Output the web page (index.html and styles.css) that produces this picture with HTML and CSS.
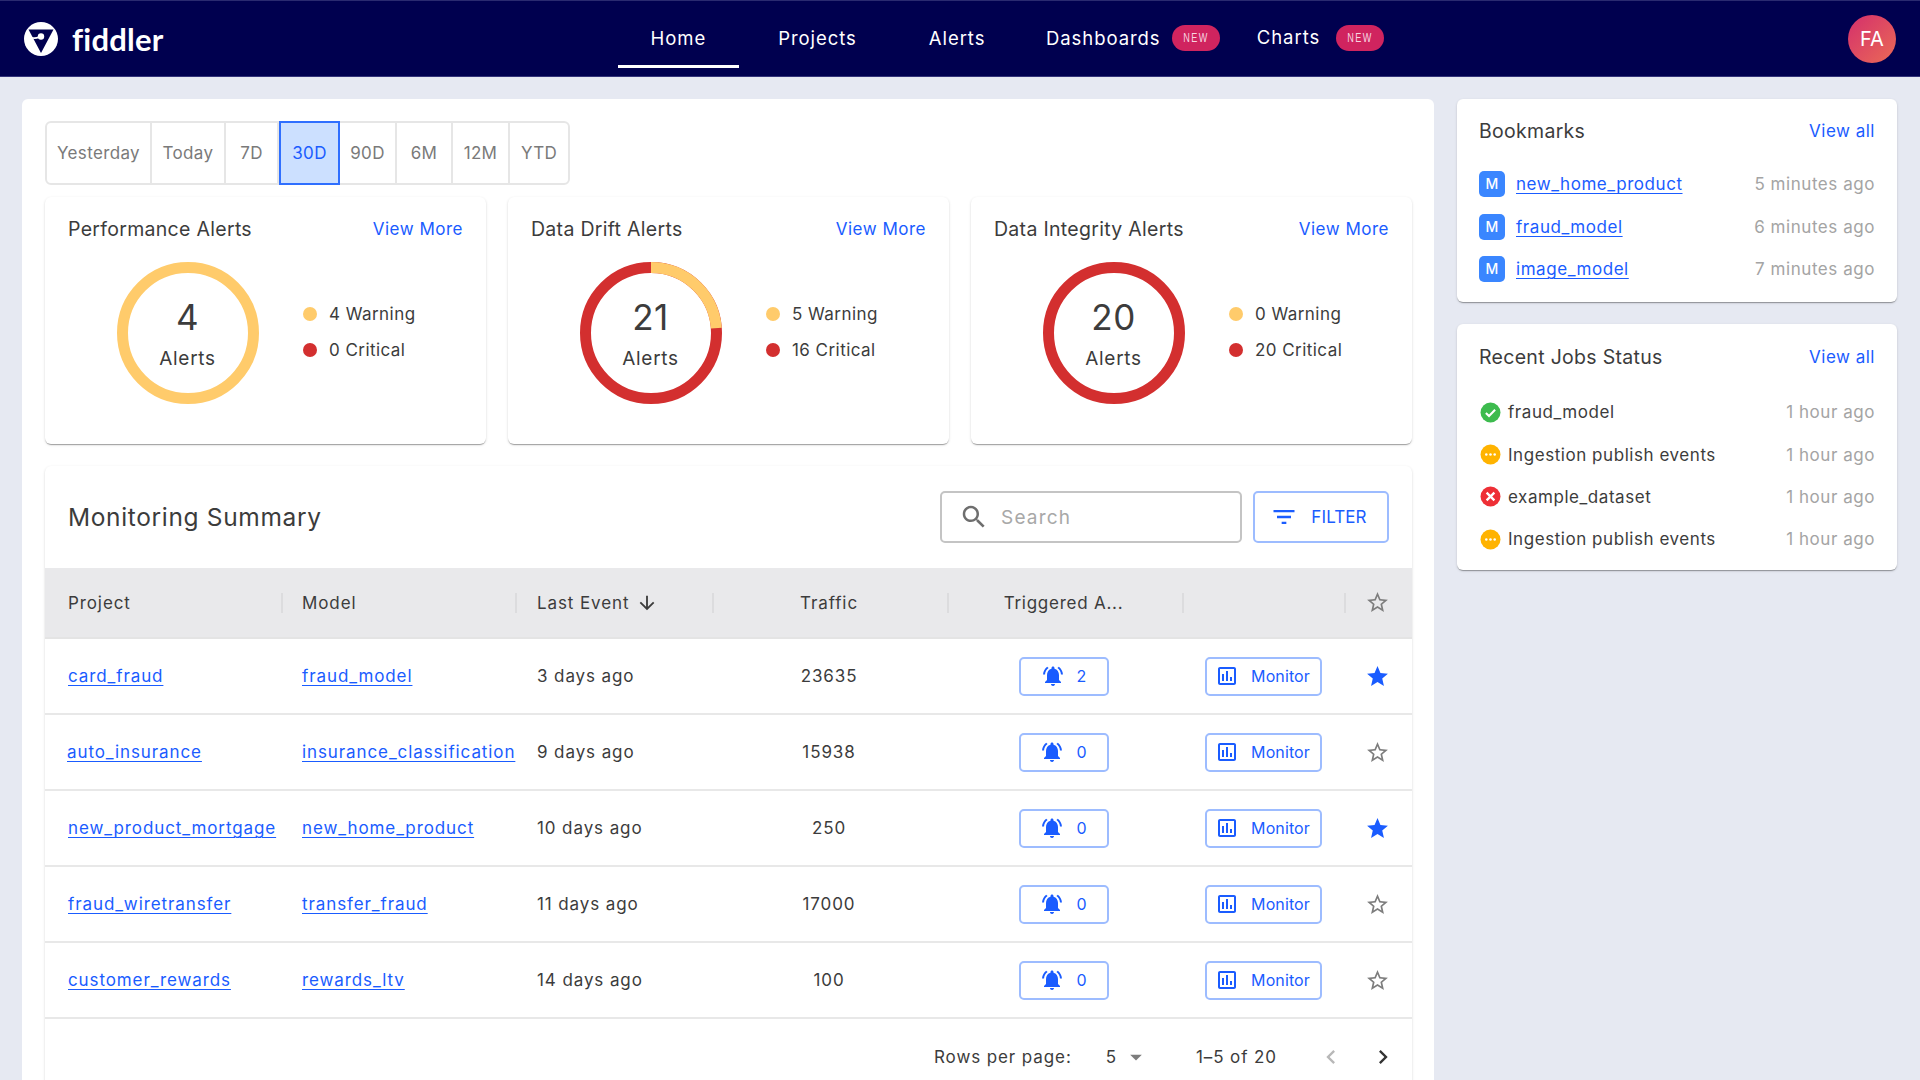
FILE: index.html
```html
<!DOCTYPE html>
<html lang="en">
<head>
    <meta charset="UTF-8">
    <title>Fiddler</title>
    <link rel="stylesheet" href="styles.css">
</head>
<body>
    <svg class="sprite" xmlns="http://www.w3.org/2000/svg">
        <symbol id="i-bell" viewBox="0 0 24 24"><path d="M7.58 4.08L6.15 2.65C3.75 4.48 2.17 7.3 2.03 10.5h2c.15-2.65 1.51-4.97 3.55-6.42zm12.39 6.42h2c-.15-3.2-1.73-6.02-4.12-7.85l-1.42 1.43c2.02 1.45 3.39 3.77 3.54 6.42zM18 11c0-3.07-1.64-5.64-4.5-6.32V4c0-.83-.67-1.5-1.5-1.5s-1.5.67-1.5 1.5v.68C7.63 5.36 6 7.92 6 11v5l-2 2v1h16v-1l-2-2v-5zm-6 11c.14 0 .27-.01.4-.04.65-.14 1.18-.58 1.44-1.18.1-.24.15-.5.15-.78h-4c.01 1.1.9 2 2.01 2z"/></symbol>
        <symbol id="i-chart" viewBox="0 0 24 24"><path d="M19 3H5c-1.1 0-2 .9-2 2v14c0 1.1.9 2 2 2h14c1.1 0 2-.9 2-2V5c0-1.1-.9-2-2-2zm0 16H5V5h14v14zM7 10h2v7H7zm4-3h2v10h-2zm4 6h2v4h-2z"/></symbol>
        <symbol id="i-star" viewBox="0 0 24 24"><path d="M12 17.27L18.18 21l-1.64-7.03L22 9.24l-7.19-.61L12 2 9.19 8.63 2 9.24l5.46 4.73L5.82 21z"/></symbol>
        <symbol id="i-star-o" viewBox="0 0 24 24"><path d="M22 9.24l-7.19-.62L12 2 9.19 8.63 2 9.24l5.46 4.73L5.82 21 12 17.27 18.18 21l-1.63-7.03L22 9.24zM12 15.4l-3.76 2.27 1-4.28-3.32-2.88 4.38-.38L12 6.1l1.71 4.04 4.38.38-3.32 2.88 1 4.28L12 15.4z"/></symbol>
        <symbol id="i-ok" viewBox="0 0 20 20"><circle cx="10" cy="10" r="9.5" fill="#3dbb4e"/><path d="M5.6 10.4l3 3 5.8-6" fill="none" stroke="#fff" stroke-width="2"/></symbol>
        <symbol id="i-wait" viewBox="0 0 20 20"><circle cx="10" cy="10" r="9.5" fill="#ffb300"/><circle cx="6" cy="10" r="1.2" fill="#fff"/><circle cx="10" cy="10" r="1.2" fill="#fff"/><circle cx="14" cy="10" r="1.2" fill="#fff"/></symbol>
        <symbol id="i-fail" viewBox="0 0 20 20"><circle cx="10" cy="10" r="9.5" fill="#ee2f36"/><path d="M6.3 6.3l7.4 7.4M13.7 6.3l-7.4 7.4" fill="none" stroke="#fff" stroke-width="2.2"/></symbol>
    </svg>

    <header class="topbar">
        <a class="brand">
            <svg class="brand-mark" viewBox="0 0 34 34">
                <circle cx="17" cy="17" r="17" fill="#fff"/>
                <path d="M4.5 7.5h25L17 31z" fill="#00004f"/>
                <path d="M7 15.5c3 1 6 .5 8-.5" fill="none" stroke="#fff" stroke-width="1.8"/>
                <circle cx="17" cy="14.5" r="3.2" fill="#fff"/>
            </svg>
            <span>fiddler</span>
        </a>
        <nav class="tabs">
            <a class="tab active">Home</a>
            <a class="tab">Projects</a>
            <a class="tab">Alerts</a>
            <a class="tab tab-dash">Dashboards <span class="badge"><i>NEW</i></span></a>
            <a class="tab tab-charts"><span class="raised">Charts</span> <span class="badge"><i>NEW</i></span></a>
        </nav>
        <div class="avatar">FA</div>
    </header>

    <div class="page">
        <main class="panel">
            <div class="ranges">
                <span class="range r-yesterday">Yesterday</span>
                <span class="range r-today">Today</span>
                <span class="range r-7d">7D</span>
                <span class="range r-30d selected">30D</span>
                <span class="range r-90d">90D</span>
                <span class="range r-6m">6M</span>
                <span class="range r-12m">12M</span>
                <span class="range r-ytd">YTD</span>
            </div>

            <section class="alert-cards">
                <div class="card alert-card">
                    <div class="card-head"><h3>Performance Alerts</h3><a class="link">View More</a></div>
                    <div class="alert-body">
                        <div class="donut">
                            <svg viewBox="0 0 142 142"><circle class="ring warn" cx="71" cy="71" r="65"/></svg>
                            <div class="donut-label"><b>4</b><span>Alerts</span></div>
                        </div>
                        <ul class="legend">
                            <li><i class="dot dot-warn"></i>4 Warning</li>
                            <li><i class="dot dot-crit"></i>0 Critical</li>
                        </ul>
                    </div>
                </div>
                <div class="card alert-card">
                    <div class="card-head"><h3>Data Drift Alerts</h3><a class="link">View More</a></div>
                    <div class="alert-body">
                        <div class="donut">
                            <svg viewBox="0 0 142 142">
                                <circle class="ring crit" cx="71" cy="71" r="65"/>
                                <circle class="ring warn" cx="71" cy="71" r="65" pathLength="21" stroke-dasharray="5 16" transform="rotate(-90 71 71)"/>
                            </svg>
                            <div class="donut-label"><b>21</b><span>Alerts</span></div>
                        </div>
                        <ul class="legend">
                            <li><i class="dot dot-warn"></i>5 Warning</li>
                            <li><i class="dot dot-crit"></i>16 Critical</li>
                        </ul>
                    </div>
                </div>
                <div class="card alert-card">
                    <div class="card-head"><h3>Data Integrity Alerts</h3><a class="link">View More</a></div>
                    <div class="alert-body">
                        <div class="donut">
                            <svg viewBox="0 0 142 142"><circle class="ring crit" cx="71" cy="71" r="65"/></svg>
                            <div class="donut-label"><b>20</b><span>Alerts</span></div>
                        </div>
                        <ul class="legend">
                            <li><i class="dot dot-warn"></i>0 Warning</li>
                            <li><i class="dot dot-crit"></i>20 Critical</li>
                        </ul>
                    </div>
                </div>
            </section>

            <section class="card summary">
                <div class="summary-head">
                    <h2>Monitoring Summary</h2>
                    <div class="search">
                        <svg class="icon search-icon" viewBox="0 0 24 24"><path d="M15.5 14h-.79l-.28-.27C15.41 12.59 16 11.11 16 9.5 16 5.91 13.09 3 9.5 3S3 5.91 3 9.5 5.91 16 9.5 16c1.61 0 3.09-.59 4.23-1.57l.27.28v.79l5 4.99L20.49 19l-4.99-5zm-6 0C7.01 14 5 11.99 5 9.5S7.01 5 9.5 5 14 7.01 14 9.5 11.99 14 9.5 14z"/></svg>
                        <span>Search</span>
                    </div>
                    <button class="filter">
                        <svg class="icon" viewBox="0 0 24 24"><path d="M10 18h4v-2h-4v2zM3 6v2h18V6H3zm3 7h12v-2H6v2z"/></svg>
                        FILTER
                    </button>
                </div>

                <table>
                    <colgroup>
                        <col class="c-project"><col class="c-model"><col class="c-event"><col class="c-traffic"><col class="c-alerts"><col class="c-monitor"><col class="c-star">
                    </colgroup>
                    <thead>
                        <tr>
                            <th>Project</th>
                            <th>Model</th>
                            <th>Last Event <svg class="icon sort" viewBox="0 0 24 24"><path d="M20 12l-1.41-1.41L13 16.17V4h-2v12.17l-5.58-5.59L4 12l8 8 8-8z"/></svg></th>
                            <th class="mid">Traffic</th>
                            <th class="mid">Triggered A...</th>
                            <th></th>
                            <th class="star-cell"><svg class="star"><use href="#i-star-o"/></svg></th>
                        </tr>
                    </thead>
                    <tbody>
                        <tr>
                            <td><a class="ul">card_fraud</a></td>
                            <td><a class="ul">fraud_model</a></td>
                            <td>3 days ago</td>
                            <td class="mid">23635</td>
                            <td class="mid"><button class="btn btn-bell"><svg class="icon"><use href="#i-bell"/></svg>2</button></td>
                            <td><button class="btn btn-monitor"><svg class="icon"><use href="#i-chart"/></svg>Monitor</button></td>
                            <td class="star-cell"><svg class="star on"><use href="#i-star"/></svg></td>
                        </tr>
                        <tr>
                            <td><a class="ul nudge">auto_insurance</a></td>
                            <td><a class="ul">insurance_classification</a></td>
                            <td>9 days ago</td>
                            <td class="mid">15938</td>
                            <td class="mid"><button class="btn btn-bell"><svg class="icon"><use href="#i-bell"/></svg>0</button></td>
                            <td><button class="btn btn-monitor"><svg class="icon"><use href="#i-chart"/></svg>Monitor</button></td>
                            <td class="star-cell"><svg class="star"><use href="#i-star-o"/></svg></td>
                        </tr>
                        <tr>
                            <td><a class="ul">new_product_mortgage</a></td>
                            <td><a class="ul">new_home_product</a></td>
                            <td>10 days ago</td>
                            <td class="mid">250</td>
                            <td class="mid"><button class="btn btn-bell"><svg class="icon"><use href="#i-bell"/></svg>0</button></td>
                            <td><button class="btn btn-monitor"><svg class="icon"><use href="#i-chart"/></svg>Monitor</button></td>
                            <td class="star-cell"><svg class="star on"><use href="#i-star"/></svg></td>
                        </tr>
                        <tr>
                            <td><a class="ul">fraud_wiretransfer</a></td>
                            <td><a class="ul">transfer_fraud</a></td>
                            <td>11 days ago</td>
                            <td class="mid">17000</td>
                            <td class="mid"><button class="btn btn-bell"><svg class="icon"><use href="#i-bell"/></svg>0</button></td>
                            <td><button class="btn btn-monitor"><svg class="icon"><use href="#i-chart"/></svg>Monitor</button></td>
                            <td class="star-cell"><svg class="star"><use href="#i-star-o"/></svg></td>
                        </tr>
                        <tr>
                            <td><a class="ul">customer_rewards</a></td>
                            <td><a class="ul">rewards_ltv</a></td>
                            <td>14 days ago</td>
                            <td class="mid">100</td>
                            <td class="mid"><button class="btn btn-bell"><svg class="icon"><use href="#i-bell"/></svg>0</button></td>
                            <td><button class="btn btn-monitor"><svg class="icon"><use href="#i-chart"/></svg>Monitor</button></td>
                            <td class="star-cell"><svg class="star"><use href="#i-star-o"/></svg></td>
                        </tr>
                    </tbody>
                </table>

                <div class="pager">
                    <span>Rows per page:</span>
                    <span class="per-page">5</span>
                    <svg class="caret" viewBox="0 0 24 24"><path d="M7 10l5 5 5-5z"/></svg>
                    <span class="page-count">1–5 of 20</span>
                    <svg class="chev chev-off" viewBox="0 0 24 24"><path d="M15.41 7.41L14 6l-6 6 6 6 1.41-1.41L10.83 12z"/></svg>
                    <svg class="chev" viewBox="0 0 24 24"><path d="M10 6L8.59 7.41 13.17 12l-4.58 4.59L10 18l6-6z"/></svg>
                </div>
            </section>
        </main>

        <aside class="side">
            <section class="card side-card">
                <div class="side-head"><h3>Bookmarks</h3><a class="link">View all</a></div>
                <ul class="side-list">
                    <li><i class="model-tag">M</i><a class="ul">new_home_product</a><time>5 minutes ago</time></li>
                    <li><i class="model-tag">M</i><a class="ul">fraud_model</a><time>6 minutes ago</time></li>
                    <li><i class="model-tag">M</i><a class="ul">image_model</a><time>7 minutes ago</time></li>
                </ul>
            </section>
            <section class="card side-card">
                <div class="side-head"><h3>Recent Jobs Status</h3><a class="link">View all</a></div>
                <ul class="side-list jobs">
                    <li><svg class="status"><use href="#i-ok"/></svg><span>fraud_model</span><time>1 hour ago</time></li>
                    <li><svg class="status"><use href="#i-wait"/></svg><span>Ingestion publish events</span><time>1 hour ago</time></li>
                    <li><svg class="status"><use href="#i-fail"/></svg><span>example_dataset</span><time>1 hour ago</time></li>
                    <li><svg class="status"><use href="#i-wait"/></svg><span>Ingestion publish events</span><time>1 hour ago</time></li>
                </ul>
            </section>
        </aside>
    </div>
</body>
</html>
```

FILE: styles.css
```css
* {
    margin: 0;
    padding: 0;
    box-sizing: border-box;
}

body {
    width: 1920px;
    height: 1080px;
    overflow: hidden;
    background: #e6e9f2;
    color: #3c3c3c;
    font-family: Inter, "Noto Sans", sans-serif;
    font-size: 17px;
    letter-spacing: 0.55px;
}

ul {
    list-style: none;
}

i {
    font-style: normal;
}

.sprite {
    display: none;
}

.icon {
    width: 24px;
    height: 24px;
    fill: currentColor;
    flex: none;
}

/* top bar */
.topbar {
    display: flex;
    align-items: center;
    height: 77px;
    background: #00004f;
    border-top: 1px solid #2a2a70;
    border-bottom: 1px solid #34347a;
    color: #fff;
}

.brand {
    display: flex;
    align-items: center;
    width: 618px;
    padding-left: 24px;
    gap: 14px;
    font-family: Lato, sans-serif;
    font-size: 31px;
    font-weight: 700;
    letter-spacing: 0.2px;
}

.brand-mark {
    width: 34px;
    height: 34px;
}

.tabs {
    display: flex;
    align-self: stretch;
    flex: 1;
    font-size: 18.5px;
    letter-spacing: 0.95px;
}

.tab {
    display: flex;
    align-items: center;
    padding: 8px 32.5px 0;
    margin-right: 7px;
    height: 66px;
    white-space: pre;
}

.tab.active {
    height: 67px;
    padding-top: 10px;
    border-bottom: 3px solid #fff;
}

.tab-dash {
    padding: 8px 0 0;
    margin: 0 0 0 21px;
}

.tab-charts {
    padding: 8px 0 0;
    margin-left: 37px;
}

.raised {
    margin-bottom: 3px;
}

.badge {
    display: inline-block;
    width: 48px;
    height: 26px;
    margin-left: 5px;
    border-radius: 13px;
    background: #d0245f;
    color: #f7d5e0;
    font-family: "Liberation Sans", sans-serif;
    font-size: 13px;
    line-height: 26px;
    letter-spacing: 2px;
    text-align: center;
}

.badge i {
    display: block;
    transform: scaleX(0.7);
}

.tab-charts .badge {
    margin-left: 16px;
}

.avatar {
    width: 48px;
    height: 48px;
    margin-right: 24px;
    border-radius: 50%;
    background: linear-gradient(135deg, #d42f6c, #ea6a56);
    font-size: 20px;
    letter-spacing: 0;
    line-height: 48px;
    text-align: center;
}

/* page columns */
.page {
    display: flex;
    align-items: flex-start;
    gap: 23px;
    padding: 22px 23px 0 22px;
}

.panel {
    width: 1412px;
    height: 1100px;
    padding: 22px 22px 0 23px;
    border-radius: 6px;
    background: #fff;
}

.side {
    display: flex;
    flex-direction: column;
    gap: 22px;
    width: 440px;
}

.card {
    border-radius: 6px;
    background: #fff;
    box-shadow: 0 2px 1px -1px rgba(0, 0, 0, .2), 0 1px 1px rgba(0, 0, 0, .14), 0 1px 3px rgba(0, 0, 0, .12);
}

h2, h3 {
    font-weight: 400;
}

h3 {
    font-size: 19.5px;
    letter-spacing: 0.3px;
}

.link {
    color: #1a5cff;
    letter-spacing: 0.5px;
}

.ul {
    color: #1a5cff;
    text-decoration: underline;
    text-underline-offset: 3px;
    text-decoration-thickness: 1px;
}

/* range picker */
.ranges {
    display: flex;
    width: 525px;
    height: 64px;
    border: 2px solid #e6e6e6;
    border-radius: 6px;
    color: #7a7a7a;
    letter-spacing: 0.35px;
}

.range {
    display: flex;
    align-items: center;
    justify-content: center;
    border-right: 2px solid #e6e6e6;
    height: 60px;
}

.r-yesterday { width: 105px; }
.r-today { width: 74px; }
.r-7d { width: 53px; }
.r-30d { width: 61px; }
.r-90d { width: 57px; }
.r-6m { width: 56px; }
.r-12m { width: 57px; }
.r-ytd { width: 58px; border-right: 0; }

.range.selected {
    height: 64px;
    margin-top: -2px;
    border: 2px solid #2f6fff;
    background: #cce0ff;
    color: #1a5cff;
}

/* alert cards */
.alert-cards {
    display: grid;
    grid-template-columns: repeat(3, 441px);
    gap: 22px;
    margin-top: 12px;
}

.alert-card {
    height: 247px;
    padding: 20px 23px 0 23px;
}

.card-head,
.side-head,
.side-list li {
    display: flex;
    justify-content: space-between;
    align-items: center;
}

.alert-body {
    display: flex;
    align-items: flex-start;
    margin-top: 21px;
    padding-left: 48.5px;
}

.donut {
    display: grid;
    width: 142px;
    height: 142px;
}

.donut > * {
    grid-area: 1 / 1;
}

.ring {
    fill: none;
    r: 65.5px;
    stroke-width: 11;
}

.ring.warn {
    stroke: #ffcb6b;
}

.ring.crit {
    stroke: #d32f2f;
}

.donut-label {
    display: flex;
    flex-direction: column;
    align-items: center;
    padding-top: 33px;
}

.donut-label b {
    font-size: 35px;
    font-weight: 400;
    line-height: 44px;
    letter-spacing: 0.5px;
}

.donut-label span {
    margin-top: 8px;
    font-size: 19px;
    line-height: 24px;
    letter-spacing: 0.7px;
}

.legend {
    margin: 34px 0 0 44.5px;
}

.legend li {
    display: flex;
    align-items: center;
    gap: 12px;
    height: 36px;
    letter-spacing: 0.45px;
}

.dot {
    width: 14px;
    height: 14px;
    border-radius: 50%;
}

.dot-warn {
    background: #ffcb6b;
}

.dot-crit {
    background: #d32f2f;
}

/* monitoring table */
.summary {
    margin-top: 22px;
    height: 640px;
}

.summary-head {
    display: flex;
    align-items: center;
    height: 102px;
    padding: 0 23px 0 23px;
}

.summary-head h2 {
    flex: 1;
    font-size: 24.5px;
    letter-spacing: 0.65px;
}

.search {
    display: flex;
    align-items: center;
    gap: 12px;
    width: 302px;
    height: 52px;
    padding-left: 17px;
    border: 2px solid #c4c4c4;
    border-radius: 5px;
    color: #a8a8a8;
    font-size: 19px;
    letter-spacing: 1.2px;
}

.search-icon {
    width: 30px;
    height: 30px;
    color: #6e6e6e;
}

.filter {
    display: flex;
    align-items: center;
    justify-content: center;
    gap: 13px;
    width: 136px;
    height: 52px;
    margin-left: 11px;
    padding-right: 5px;
    border: 2px solid #9dbcff;
    border-radius: 5px;
    background: #fff;
    color: #1a5cff;
    font: inherit;
    letter-spacing: 0.1px;
}

.filter .icon {
    width: 28px;
    height: 28px;
}

table {
    width: 100%;
    table-layout: fixed;
    border-collapse: collapse;
    letter-spacing: 0.9px;
}

.c-project { width: 238px; }
.c-model { width: 234px; }
.c-event { width: 197px; }
.c-traffic { width: 235px; }
.c-alerts { width: 235px; }
.c-monitor { width: 162px; }

th {
    height: 70px;
    padding-left: 19px;
    background: #e9e9eb linear-gradient(#dcdcde, #dcdcde) no-repeat right center / 2px 20px;
    border-bottom: 2px solid #e4e4e4;
    font-weight: 400;
    text-align: left;
}

th:first-child,
td:first-child {
    padding-left: 23px;
}

th:nth-child(2),
td:nth-child(2) {
    padding-left: 19px;
}

th:nth-child(3),
td:nth-child(3) {
    padding-left: 20px;
}

th:nth-last-child(1) {
    background-image: none;
}

td {
    height: 76px;
    padding-left: 21px;
    border-bottom: 2px solid #e8e8e8;
    white-space: nowrap;
}

.mid,
th.mid {
    padding: 0 5px 0 0;
    text-align: center;
}

th.mid:nth-child(5) {
    padding-right: 6px;
    letter-spacing: 0.75px;
}

td.mid:nth-child(5) {
    padding-right: 6px;
}

.nudge {
    margin-left: -1px;
}

.sort {
    width: 22px;
    height: 22px;
    margin-left: 1px;
    vertical-align: -5px;
}

.star-cell {
    padding-left: 19px;
}

.star {
    display: block;
    width: 25px;
    height: 25px;
    fill: #7d7d7d;
}

.star.on {
    fill: #1a5cff;
}

.btn {
    display: inline-flex;
    align-items: center;
    justify-content: center;
    height: 39px;
    border: 2px solid #9dbcff;
    border-radius: 5px;
    background: #fff;
    color: #1a5cff;
    font: inherit;
    font-size: 16px;
    letter-spacing: 0.1px;
}

.btn-bell {
    width: 90px;
    gap: 12px;
    vertical-align: middle;
}

.btn-monitor {
    width: 117px;
    gap: 12px;
    padding-right: 2px;
    vertical-align: middle;
}

.pager {
    display: flex;
    align-items: center;
    height: 76px;
    padding-left: 889px;
    letter-spacing: 0.9px;
}

.per-page {
    margin-left: 34px;
}

.caret {
    width: 28px;
    height: 28px;
    margin-left: 5px;
    fill: #7d7d7d;
}

.page-count {
    margin-left: 46px;
}

.chev {
    width: 28px;
    height: 28px;
    margin-left: 24px;
    fill: #333;
}

.chev-off {
    margin-left: 40px;
    fill: #b8b8b8;
}

/* right column */
.side-card {
    padding: 20px 22px 0 22px;
}

.side-card:first-child {
    height: 203px;
}

.side-card:last-child {
    height: 246px;
    padding-top: 21px;
}

.side-list {
    margin-top: 20px;
}

.side-list.jobs {
    margin-top: 22px;
}

.side-list li {
    justify-content: flex-start;
    height: 42.4px;
}

.side-list time {
    margin-left: auto;
    color: #a4a4a4;
}

.model-tag {
    width: 26px;
    height: 26px;
    margin-right: 11px;
    border-radius: 5px;
    background: #3a86ff;
    color: #fff;
    font-size: 14px;
    font-weight: 500;
    letter-spacing: 0;
    line-height: 26px;
    text-align: center;
}

.status {
    width: 21px;
    height: 21px;
    margin: 0 7px 0 1px;
}
```
